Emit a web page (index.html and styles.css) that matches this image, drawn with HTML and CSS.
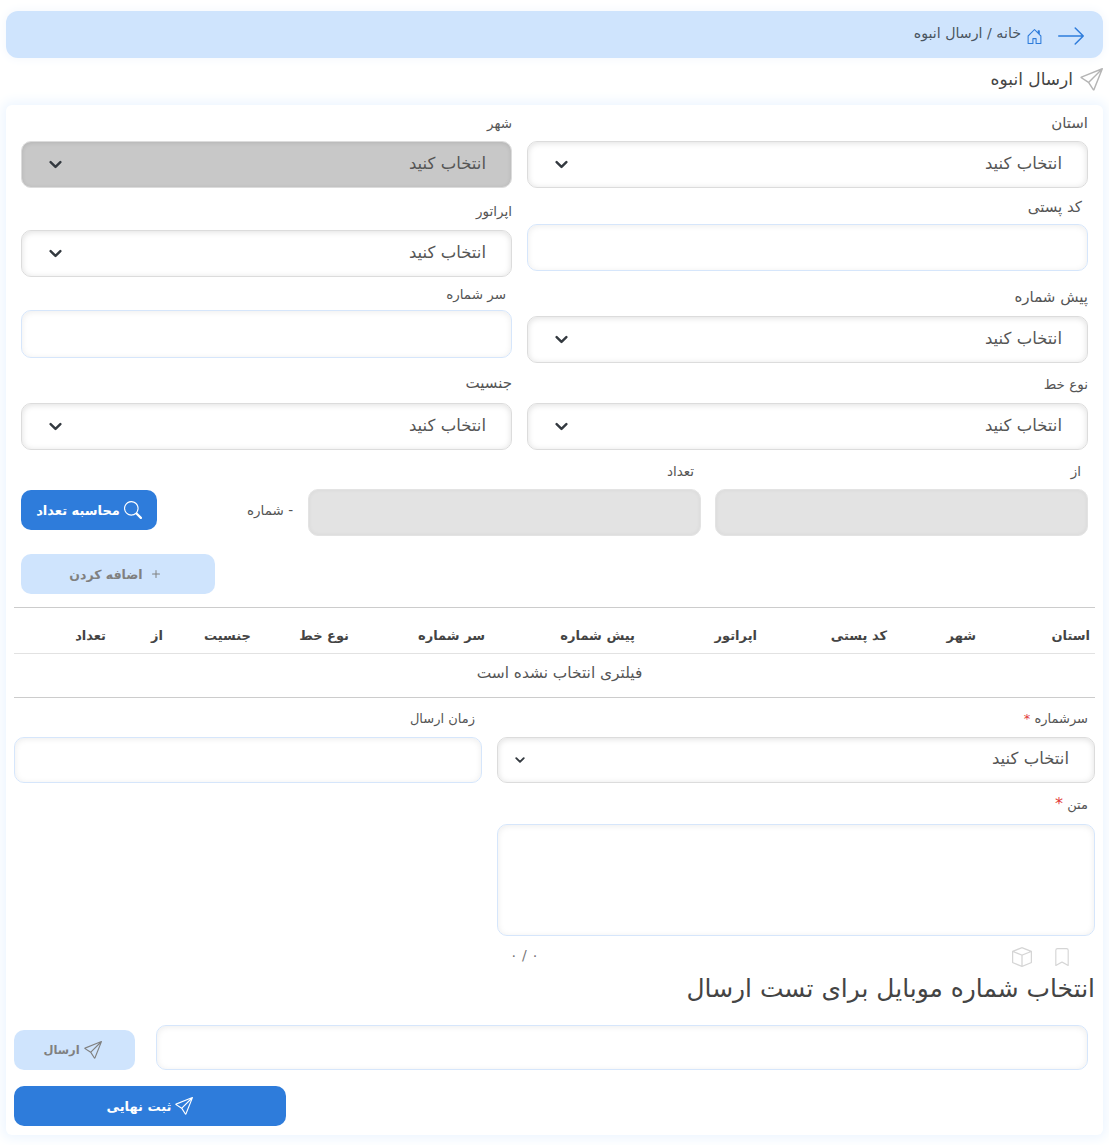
FILE: index.html
```html
<!DOCTYPE html>
<html lang="fa" dir="rtl">
<head>
<meta charset="utf-8">
<title>ارسال انبوه</title>
<link rel="stylesheet" href="styles.css">
</head>
<body>
<svg class="defs" width="0" height="0" aria-hidden="true">
  <symbol id="i-send" viewBox="0 0 16 16"><path d="M15.854.146a.5.5 0 0 1 .11.54l-5.819 14.547a.75.75 0 0 1-1.329.124l-3.178-4.995L.643 7.184a.75.75 0 0 1 .124-1.33L15.314.037a.5.5 0 0 1 .54.11ZM6.636 10.07l2.761 4.338L14.13 2.576 6.636 10.07Zm6.787-8.201L1.591 6.602l4.339 2.76 7.494-7.493Z"/></symbol>
</svg>
<nav class="crumb">
  <svg class="i-arrow" viewBox="0 0 16 16"><path d="M1 8H15M10.4 3.4 15 8l-4.6 4.6"/></svg>
  <svg class="i-home" viewBox="0 0 16 16"><path d="M8.354 1.146a.5.5 0 0 0-.708 0l-6 6A.5.5 0 0 0 1.5 7.5v7a.5.5 0 0 0 .5.5h4.5a.5.5 0 0 0 .5-.5v-4h2v4a.5.5 0 0 0 .5.5H14a.5.5 0 0 0 .5-.5v-7a.5.5 0 0 0-.146-.354L13 5.793V2.5a.5.5 0 0 0-.5-.5h-1a.5.5 0 0 0-.5.5v1.293L8.354 1.146zM2.5 14V7.707l5.5-5.5 5.5 5.5V14H10v-4a.5.5 0 0 0-.5-.5h-3a.5.5 0 0 0-.5.5v4H2.5z"/></svg>
  <span class="crumb-text">خانه / ارسال انبوه</span>
</nav>
<h1 class="page-title"><svg class="i-title"><use href="#i-send"/></svg><span>ارسال انبوه</span></h1>
<main class="card">
  <section class="filters">
    <div class="col col-r">
      <label class="lg">استان</label>
      <select class="g8"><option>انتخاب کنید</option></select>
      <label class="mt-9 inset lg">کد پستی</label>
      <input class="g7" type="text">
      <label class="mt-16 lg">پیش شماره</label>
      <select class="g9"><option>انتخاب کنید</option></select>
      <label class="mt-11">نوع خط</label>
      <select class="g9"><option>انتخاب کنید</option></select>
    </div>
    <div class="col col-l">
      <label>شهر</label>
      <select class="g8 is-disabled" disabled><option>انتخاب کنید</option></select>
      <label class="mt-13">اپراتور</label>
      <select class="g9"><option>انتخاب کنید</option></select>
      <label class="mt-7 inset">سر شماره</label>
      <input class="g6 tall" type="text">
      <label class="mt-15 lg">جنسیت</label>
      <select class="g10"><option>انتخاب کنید</option></select>
    </div>
  </section>
  <section class="range">
    <div class="range-field rf-from"><label>از</label><input class="grey" type="text" disabled></div>
    <div class="range-field rf-count"><label>تعداد</label><input class="grey" type="text" disabled></div>
    <span class="unit">- شماره</span>
    <button class="btn btn-primary btn-calc" type="button"><svg viewBox="0 0 16 16"><path d="M11.742 10.344a6.5 6.5 0 1 0-1.397 1.398h-.001c.03.04.062.078.098.115l3.85 3.85a1 1 0 0 0 1.415-1.414l-3.85-3.85a1.007 1.007 0 0 0-.115-.1zM12 6.5a5.5 5.5 0 1 1-11 0 5.5 5.5 0 0 1 11 0z"/></svg>محاسبه تعداد</button>
  </section>
  <div class="add-row">
    <button class="btn btn-soft btn-add" type="button"><svg viewBox="0 0 16 16"><path d="M8 4a.5.5 0 0 1 .5.5v3h3a.5.5 0 0 1 0 1h-3v3a.5.5 0 0 1-1 0v-3h-3a.5.5 0 0 1 0-1h3v-3A.5.5 0 0 1 8 4z"/></svg>اضافه کردن</button>
  </div>
  <div class="table">
    <div class="thead">
      <span>استان</span><span>شهر</span><span>کد پستی</span><span>اپراتور</span><span>پیش شماره</span><span>سر شماره</span><span>نوع خط</span><span>جنسیت</span><span>از</span><span>تعداد</span>
    </div>
    <div class="tempty">فیلتری انتخاب نشده است</div>
  </div>
  <section class="send-row">
    <div class="send-r">
      <label class="lbl-sms">سرشماره <b>*</b></label>
      <select class="small-caret"><option>انتخاب کنید</option></select>
      <label class="lbl-text">متن <b class="big">*</b></label>
      <textarea></textarea>
      <div class="meta">
        <svg viewBox="0 0 16 16"><path d="M2 2a2 2 0 0 1 2-2h8a2 2 0 0 1 2 2v13.5a.5.5 0 0 1-.777.416L8 13.101l-5.223 2.815A.5.5 0 0 1 2 15.5V2zm2-1a1 1 0 0 0-1 1v12.566l4.723-2.482a.5.5 0 0 1 .554 0L13 14.566V2a1 1 0 0 0-1-1H4z"/></svg>
        <svg viewBox="0 0 16 16"><path d="M8.186 1.113a.5.5 0 0 0-.372 0L1.846 3.5 8 5.961 14.154 3.5 8.186 1.113zM15 4.239l-6.5 2.6v7.922l6.5-2.6V4.24zM7.5 14.762V6.838L1 4.239v7.925l6.5 2.6zM7.443.184a1.5 1.5 0 0 1 1.114 0l7.129 2.852A.5.5 0 0 1 16 3.5v8.662a1 1 0 0 1-.629.928l-7.185 2.874a.5.5 0 0 1-.372 0L.63 13.09a1 1 0 0 1-.63-.928V3.5a.5.5 0 0 1 .314-.464L7.443.184z"/></svg>
        <span class="counter">۰ / ۰</span>
      </div>
    </div>
    <div class="send-l">
      <label class="lbl-time">زمان ارسال</label>
      <input type="text">
    </div>
  </section>
  <h2 class="test-title">انتخاب شماره موبایل برای تست ارسال</h2>
  <section class="test-row">
    <input type="text">
    <button class="btn btn-soft btn-send" type="button"><svg><use href="#i-send"/></svg>ارسال</button>
  </section>
  <button class="btn btn-primary btn-final" type="button"><svg><use href="#i-send"/></svg>ثبت نهایی</button>
</main>
</body>
</html>
```
FILE: styles.css
```css
* { box-sizing: border-box; }
html, body { margin: 0; padding: 0; }
body {
  background: #fff;
  font-family: "DejaVu Sans", "Noto Sans", sans-serif;
  font-size: 13px;
  color: #555;
  height: 1145px;
  overflow: hidden;
  padding-top: 11px;
}
.defs { position: absolute; }
svg { fill: currentColor; flex: none; }

.crumb {
  height: 47px;
  margin: 0 6px;
  background: #cfe4fd;
  border-radius: 12px;
  box-shadow: 0 0 10px 2px #f6f9fd;
  display: flex;
  align-items: center;
  padding-right: 18px;
  color: #4a5560;
}
.crumb-text { font-size: 14.2px; margin-top: -4px; }
.i-arrow { width: 28px; height: 28px; color: #2e7cdb; fill: none; stroke: currentColor; stroke-width: .85; stroke-linecap: round; stroke-linejoin: round; margin-top: 2px; }
.i-home { width: 17px; height: 17px; color: #2e7cdb; margin-right: 14px; margin-left: 5px; margin-top: 3px; }

.page-title {
  height: 47px;
  margin: 0;
  padding: 0 6px 5px 0;
  display: flex;
  align-items: center;
  gap: 7px;
  font-size: 17px;
  font-weight: 400;
  color: #444;
}
.i-title { width: 23px; height: 23px; color: #b5b5b5; }

.card {
  background: #fff;
  margin: 0 6px;
  height: 1030px;
  padding: 8px 8px 0;
  border-radius: 6px;
  box-shadow: 0 0 12px 4px #eef6ff;
}

label { display: block; font-size: 13.5px; line-height: 20px; height: 20px; color: #555; }
label.lg { font-size: 15px; }
select, input, textarea {
  display: block;
  width: 100%;
  font: inherit;
  color: #555;
  margin: 0;
  outline: none;
}
select {
  height: 47px;
  border: 1px solid #dcdcdc;
  border-radius: 10px;
  background-color: #fff;
  box-shadow: inset 0 1px 6px rgba(0,0,0,.13);
  appearance: none;
  -webkit-appearance: none;
  font-size: 16.5px;
  padding: 0 25px 3px 30px;
  background-image: url("data:image/svg+xml,%3csvg xmlns='http://www.w3.org/2000/svg' viewBox='0 0 16 16'%3e%3cpath fill='none' stroke='%23343a40' stroke-linecap='round' stroke-linejoin='round' stroke-width='3' d='m2 5 6 6 6-6'/%3e%3c/svg%3e");
  background-repeat: no-repeat;
  background-position: left 27px center;
  background-size: 13px 13px;
}
select.small-caret { background-size: 10px 10px; background-position: left 17px center; }
select.is-disabled { background-color: #c8c8c8; box-shadow: inset 0 1px 4px rgba(0,0,0,.1); opacity: 1; color: #555; }
input, textarea {
  border: 1px solid #d6e6fb;
  border-radius: 10px;
  background: #fff;
  box-shadow: inset 0 1px 6px rgba(0,0,0,.08);
  height: 47px;
}
input.grey { background: #e3e3e3; border-color: #e3e3e3; box-shadow: inset 0 0 4px rgba(0,0,0,.05); }
input.tall { height: 48px; }

.filters { display: flex; padding: 0 7px; gap: 15px; }
.col-r { width: 561px; }
.col-l { width: 491px; }
.g6 { margin-top: 6px; }
.g7 { margin-top: 7px; }
.g8 { margin-top: 8px; }
.g9 { margin-top: 9px; }
.g10 { margin-top: 10px; }
.mt-7 { margin-top: 7px; }
.mt-9 { margin-top: 9px; }
.mt-11 { margin-top: 11px; }
.mt-13 { margin-top: 13px; }
.mt-15 { margin-top: 15px; }
.mt-16 { margin-top: 16px; }
.inset { padding-right: 6px; }

.range { display: flex; padding: 0 7px; margin-top: 11px; align-items: flex-start; height: 76px; }
.range-field label { margin-bottom: 8px; }
.rf-from { width: 373px; }
.rf-from label { padding-right: 7px; }
.rf-count { width: 393px; margin-right: 14px; }
.rf-count label { padding-right: 7px; }
.unit { margin-right: 15px; width: 94px; line-height: 20px; margin-top: 39px; flex: none; font-size: 13.5px; }
.btn {
  display: inline-flex;
  align-items: center;
  justify-content: center;
  border: 0;
  border-radius: 10px;
  height: 40px;
  font-family: inherit;
  font-weight: 700;
  font-size: 13px;
  gap: 4px;
  padding: 0;
}
.btn-primary { background: #2e7cdb; color: #fff; }
.btn-soft { background: #cfe4fd; color: #808080; }
.btn svg { width: 18px; height: 18px; }
.btn-calc { width: 136px; margin-top: 29px; flex: none; margin-right: auto; }
.add-row { padding: 0 7px; margin-top: 17px; display: flex; justify-content: flex-end; }
.btn-add { width: 194px; padding-right: 3px; gap: 5px; font-size: 12.5px; }
.btn-add svg { width: 16px; height: 16px; }

.table { margin-top: 13px; border-top: 1px solid #ccc; border-bottom: 1px solid #ccc; }
.thead {
  display: grid;
  grid-template-columns: 114px 89px 130px 122px 150px 136px 98px 88px 57px 1fr;
  height: 46px;
  align-items: center;
  padding: 9px 5px 0 0;
  border-bottom: 1px solid #e2e2e2;
  font-weight: 700;
  font-size: 13px;
  color: #444;
}
.tempty { height: 43px; line-height: 39px; text-align: center; font-size: 15.4px; color: #555; padding-left: 10px; }

.send-row { display: flex; gap: 15px; margin-top: 11px; }
.send-r { width: 598px; flex: none; }
.send-l { width: 468px; flex: none; }
.send-r label, .send-l label { padding-right: 7px; font-size: 13px; }
.send-r select { height: 46px; margin-top: 8px; }
.send-l input { height: 46px; margin-top: 8px; }
label b { color: #e23b3b; font-weight: 400; }
label b.big { font-size: 16px; }
.lbl-text { margin-top: 11px; }
textarea { margin-top: 10px; height: 112px; resize: none; }
.meta { display: flex; align-items: center; height: 30px; color: #d5d5d5; padding: 12px 24px 0 0; }
.meta svg { width: 18px; height: 20px; margin-left: 21px; }
.meta svg + svg { width: 20px; height: 20px; }
.counter { margin-right: auto; margin-left: 13px; color: #777; font-size: 14px; margin-top: -4px; }

.test-title { margin: 5px 0 0; font-size: 24.9px; font-weight: 400; line-height: 36px; color: #444; height: 36px; }
.test-row { display: flex; margin-top: 18px; height: 45px; align-items: flex-end; padding-right: 7px; justify-content: space-between; }
.test-row input { width: 932px; height: 45px; }
.btn-send { width: 121px; font-size: 11.5px; padding-right: 4px; }
.btn-final { width: 272px; margin-top: 16px; display: flex; margin-right: auto; }
```
